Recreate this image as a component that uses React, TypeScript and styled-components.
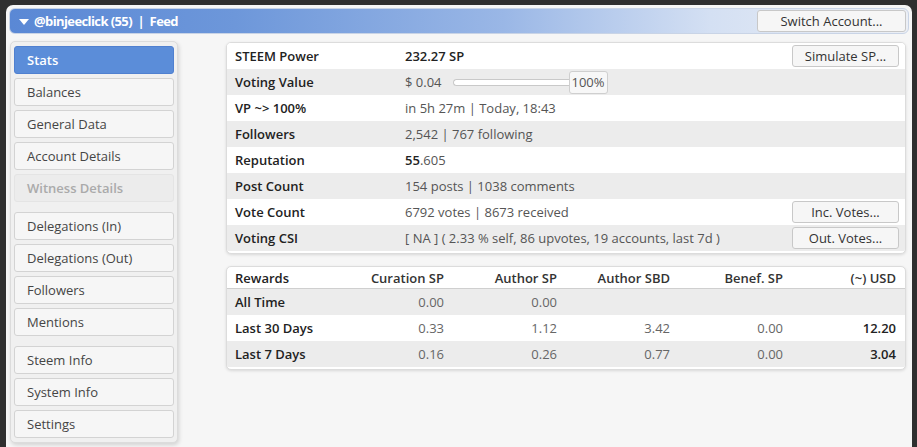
import type { ReactNode } from "react";
import styled, { createGlobalStyle } from "styled-components";

const GlobalStyle = createGlobalStyle`
  html, body {
    margin: 0;
    padding: 0;
    background: #2f2f2f;
    font-family: "Open Sans", "Liberation Sans", sans-serif;
    font-size: 13px;
    overflow: hidden;
  }
`;

interface StatRow {
  label: string;
  value: ReactNode;
  button?: string;
}

const rewardHead = ["Curation SP", "Author SP", "Author SBD", "Benef. SP", "(~) USD"];

const rewardRows = [
  { label: "All Time", values: ["0.00", "0.00", "", "", ""] },
  { label: "Last 30 Days", values: ["0.33", "1.12", "3.42", "0.00", "12.20"] },
  { label: "Last 7 Days", values: ["0.16", "0.26", "0.77", "0.00", "3.04"] },
];

const menuGroups = [
  ["Stats", "Balances", "General Data", "Account Details", "Witness Details"],
  ["Delegations (In)", "Delegations (Out)", "Followers", "Mentions"],
  ["Steem Info", "System Info", "Settings"],
];

const VotingValue = () => (
  <>
    $ 0.04
    <Track />
    <Percent>100%</Percent>
  </>
);

const App = () => {
  const statRows: StatRow[] = [
    { label: "STEEM Power", value: <Strong>232.27 SP</Strong>, button: "Simulate SP..." },
    { label: "Voting Value", value: <VotingValue /> },
    { label: "VP ~> 100%", value: "in 5h 27m | Today, 18:43" },
    { label: "Followers", value: "2,542 | 767 following" },
    {
      label: "Reputation",
      value: (
        <>
          <Strong>55</Strong>.605
        </>
      ),
    },
    { label: "Post Count", value: "154 posts | 1038 comments" },
    { label: "Vote Count", value: "6792 votes | 8673 received", button: "Inc. Votes..." },
    {
      label: "Voting CSI",
      value: "[ NA ] ( 2.33 % self, 86 upvotes, 19 accounts, last 7d )",
      button: "Out. Votes...",
    },
  ];

  return (
    <>
      <GlobalStyle />
      <Window>
        <Header>
          <Title>
            <Caret />
            @binjeeclick (55) &nbsp;|&nbsp; Feed
          </Title>
          <Button $width={149}>Switch Account...</Button>
        </Header>
        <Body>
          <Sidebar>
            {menuGroups.map((group, gi) => (
              <MenuGroup key={gi}>
                {group.map((item) => (
                  <MenuItem
                    key={item}
                    $active={item === "Stats"}
                    $disabled={item === "Witness Details"}
                  >
                    {item}
                  </MenuItem>
                ))}
              </MenuGroup>
            ))}
          </Sidebar>
          <Main>
            <Panel>
              {statRows.map((row, i) => (
                <Row key={row.label} $odd={i % 2 === 1}>
                  <Label>{row.label}</Label>
                  <Value>{row.value}</Value>
                  {row.button && <Button $width={107}>{row.button}</Button>}
                </Row>
              ))}
            </Panel>
            <Panel>
              <RewardHead>
                <RewardLabel>Rewards</RewardLabel>
                {rewardHead.map((h) => (
                  <RewardHeadCell key={h}>{h}</RewardHeadCell>
                ))}
              </RewardHead>
              {rewardRows.map((row, i) => (
                <RewardRow key={row.label} $odd={i % 2 === 0}>
                  <RewardLabel>{row.label}</RewardLabel>
                  {row.values.map((v, j) => (
                    <RewardCell key={j} $bold={j === 4}>
                      {v}
                    </RewardCell>
                  ))}
                </RewardRow>
              ))}
            </Panel>
          </Main>
        </Body>
      </Window>
    </>
  );
};

const Window = styled.div`
  margin: 5px 5px 0 6px;
  padding: 3px;
  height: calc(100vh - 11px);
  background: #f6f6f6;
  border-radius: 7px 7px 0 0;
`;

const Header = styled.div`
  display: flex;
  align-items: center;
  justify-content: space-between;
  height: 26px;
  box-sizing: border-box;
  padding: 0 2px 0 9px;
  border-radius: 6px;
  border: 1px solid #c9d4e6;
  background: linear-gradient(
    to right,
    #5a88d5 0%,
    #6d97da 25%,
    #9ab7e6 55%,
    #d4e0f3 78%,
    #eceff5 100%
  );
`;

const Title = styled.div`
  display: flex;
  align-items: center;
  color: #fff;
  font-weight: 700;
  font-size: 13px;
  letter-spacing: -0.6px;
`;

const Caret = styled.span`
  width: 0;
  height: 0;
  margin: 1px 5px 0 0;
  border-left: 5px solid transparent;
  border-right: 5px solid transparent;
  border-top: 6px solid #fff;
`;

const Button = styled.div<{ $width: number }>`
  width: ${(p) => p.$width}px;
  height: 22px;
  box-sizing: border-box;
  display: flex;
  align-items: center;
  justify-content: center;
  background: #f6f6f6;
  border: 1px solid #c8c8c8;
  border-radius: 3px;
  color: #333;
  font-size: 13px;
  flex-shrink: 0;
`;

const Body = styled.div`
  display: flex;
  align-items: flex-start;
  gap: 48px;
  padding: 7px 3px 0 1px;
`;

const Sidebar = styled.div`
  width: 168px;
  box-sizing: border-box;
  padding: 4px 3px 4px 3px;
  display: flex;
  flex-direction: column;
  gap: 10px;
  background: #f0f0f0;
  border: 1px solid #dcdcdc;
  border-radius: 5px;
  box-shadow: 1px 2px 4px rgba(0, 0, 0, 0.15);
`;

const MenuGroup = styled.div`
  display: flex;
  flex-direction: column;
  gap: 4px;
`;

const MenuItem = styled.div<{ $active?: boolean; $disabled?: boolean }>`
  height: 28px;
  box-sizing: border-box;
  display: flex;
  align-items: center;
  padding-left: 12px;
  border-radius: 3px;
  border: 1px solid ${(p) => (p.$active ? "#4f80d0" : p.$disabled ? "#e4e4e4" : "#d3d3d3")};
  background: ${(p) => (p.$active ? "#5b8dd9" : p.$disabled ? "#ececec" : "#f6f6f6")};
  color: ${(p) => (p.$active ? "#fff" : p.$disabled ? "#aaa" : "#454545")};
  font-weight: ${(p) => (p.$active || p.$disabled ? 600 : 400)};
  font-size: 13px;
`;

const Main = styled.div`
  flex: 1;
  display: flex;
  flex-direction: column;
  gap: 12px;
  margin-top: 1px;
`;

const Panel = styled.div`
  background: #fff;
  border: 1px solid #dcdcdc;
  border-radius: 5px;
  padding-bottom: 2px;
  box-shadow: 0 1px 3px rgba(0, 0, 0, 0.12);
  overflow: hidden;
`;

const Row = styled.div<{ $odd: boolean }>`
  display: flex;
  align-items: center;
  height: 26px;
  padding: 0 6px 0 8px;
  background: ${(p) => (p.$odd ? "#ececec" : "#fff")};
`;

const Label = styled.div`
  width: 170px;
  flex-shrink: 0;
  font-weight: 600;
  color: #222;
`;

const Value = styled.div`
  flex: 1;
  display: flex;
  align-items: center;
  color: #555;
`;

const Strong = styled.span`
  font-weight: 600;
  color: #222;
`;

const Track = styled.span`
  width: 116px;
  height: 7px;
  margin-left: 11px;
  box-sizing: border-box;
  border: 1px solid #c9c9c9;
  border-right: none;
  border-radius: 4px 0 0 4px;
  background: #fff;
`;

const Percent = styled.span`
  height: 23px;
  width: 39px;
  box-sizing: border-box;
  display: flex;
  align-items: center;
  justify-content: center;
  border: 1px solid #cfcfcf;
  border-radius: 3px;
  background: #f7f7f7;
  color: #555;
`;

const RewardGrid = styled.div`
  display: grid;
  grid-template-columns: 1fr repeat(5, 113px);
  align-items: center;
  padding: 0 9px 0 8px;
`;

const RewardHead = styled(RewardGrid)`
  height: 21px;
  border-bottom: 1px solid #cfcfcf;
  font-weight: 600;
  color: #333;
`;

const RewardHeadCell = styled.div`
  text-align: right;
`;

const RewardRow = styled(RewardGrid)<{ $odd: boolean }>`
  height: 26px;
  background: ${(p) => (p.$odd ? "#ececec" : "#fff")};
`;

const RewardLabel = styled.div`
  font-weight: 600;
  color: #222;
`;

const RewardCell = styled.div<{ $bold?: boolean }>`
  text-align: right;
  color: ${(p) => (p.$bold ? "#222" : "#666")};
  font-weight: ${(p) => (p.$bold ? 600 : 400)};
`;

export default App;
